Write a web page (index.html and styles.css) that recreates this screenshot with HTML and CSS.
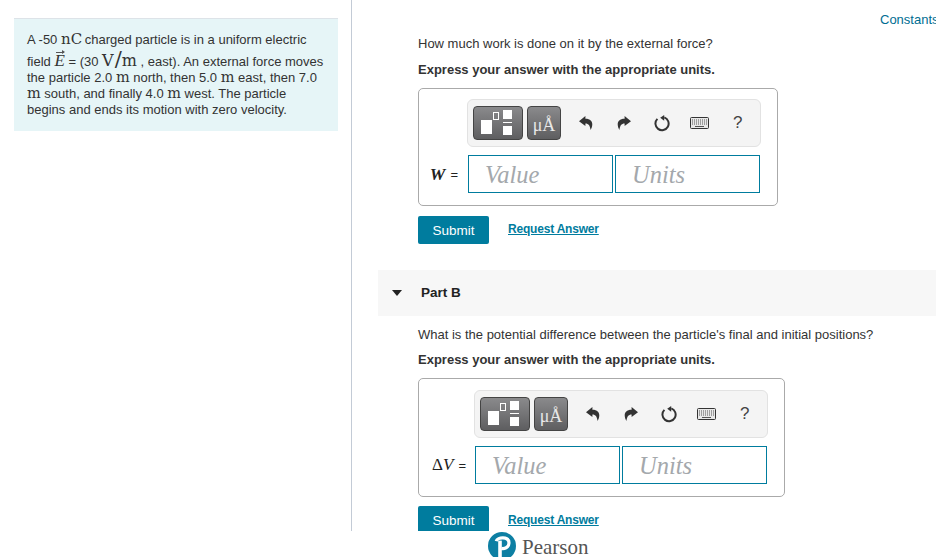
FILE: index.html
```html
<!DOCTYPE html>
<html lang="en">
<head>
    <meta charset="UTF-8">
    <title>Part A and Part B</title>
    <link rel="stylesheet" href="styles.css">
</head>
<body>
    <svg class="icon-defs" width="0" height="0">
        <symbol id="undo" viewBox="0 0 14 14">
            <path d="M6.4 0 L0 5.2 L6.4 10 V7.4 C9.6 7.4 11 9.4 11.6 14 C14.6 9 14 2.8 6.4 2.8 Z"/>
        </symbol>
        <symbol id="redo" viewBox="0 0 14 14">
            <path d="M7.6 0 L14 5.2 L7.6 10 V7.4 C4.4 7.4 3 9.4 2.4 14 C-0.6 9 0 2.8 7.6 2.8 Z"/>
        </symbol>
        <symbol id="reset" viewBox="0 0 16 17">
            <path class="ring" d="M3.4 3.9 A6.6 6.6 0 1 0 10.3 2.4"/>
            <path d="M10.2 0 L6.2 2.8 L10.2 5.8 Z"/>
        </symbol>
        <symbol id="keys" viewBox="0 0 19 12">
            <rect class="case" x="0.5" y="0.5" width="18" height="11" rx="1"/>
            <path class="keyrows" d="M2 3 H17 M2 5 H17 M2 7 H17"/>
            <path class="keyline" d="M5 9.5 H14"/>
        </symbol>
    </svg>

    <div class="page">
        <aside class="left">
            <div class="intro">
                <p>A -50 <span class="unit unit-nc">nC</span> charged particle is in a uniform electric field <span class="vec">E</span> = (30 <span class="unit unit-v">V</span><span class="unit unit-slash">/</span><span class="unit unit-m">m</span> , east). An external force moves the particle 2.0 <span class="unit">m</span> north, then 5.0 <span class="unit">m</span> east, then 7.0 <span class="unit">m</span> south, and finally 4.0 <span class="unit">m</span> west. The particle begins and ends its motion with zero velocity.</p>
            </div>
        </aside>

        <main class="right">
            <div class="constants"><a href="#">Constants</a></div>

            <section class="part part-a">
                <p class="question">How much work is done on it by the external force?</p>
                <p class="hint">Express your answer with the appropriate units.</p>
                <div class="answer answer-a">
                    <div class="toolbar">
                        <button class="tool tool-frac">
                            <span class="sq-big"></span><span class="sq-small"></span>
                            <span class="frac"><span></span><span></span></span>
                        </button>
                        <button class="tool tool-unit">μÅ</button>
                        <div class="actions">
                            <svg class="ic ic-undo"><use href="#undo"/></svg>
                            <svg class="ic ic-redo"><use href="#redo"/></svg>
                            <svg class="ic ic-reset"><use href="#reset"/></svg>
                            <svg class="ic ic-keys"><use href="#keys"/></svg>
                            <span class="help">?</span>
                        </div>
                    </div>
                    <div class="inputs">
                        <label class="var"><span class="sym sym-w">W</span><span class="eq">=</span></label>
                        <div class="field">Value</div>
                        <div class="field">Units</div>
                    </div>
                </div>
                <div class="actions-row">
                    <button class="submit">Submit</button>
                    <a class="request" href="#">Request Answer</a>
                </div>
            </section>

            <div class="part-head">
                <span class="caret"></span>
                <h2>Part B</h2>
            </div>

            <section class="part part-b">
                <p class="question">What is the potential difference between the particle's final and initial positions?</p>
                <p class="hint">Express your answer with the appropriate units.</p>
                <div class="answer answer-b">
                    <div class="toolbar">
                        <button class="tool tool-frac">
                            <span class="sq-big"></span><span class="sq-small"></span>
                            <span class="frac"><span></span><span></span></span>
                        </button>
                        <button class="tool tool-unit">μÅ</button>
                        <div class="actions">
                            <svg class="ic ic-undo"><use href="#undo"/></svg>
                            <svg class="ic ic-redo"><use href="#redo"/></svg>
                            <svg class="ic ic-reset"><use href="#reset"/></svg>
                            <svg class="ic ic-keys"><use href="#keys"/></svg>
                            <span class="help">?</span>
                        </div>
                    </div>
                    <div class="inputs">
                        <label class="var"><span class="sym">Δ<i>V</i></span><span class="eq">=</span></label>
                        <div class="field">Value</div>
                        <div class="field">Units</div>
                    </div>
                </div>
                <div class="actions-row">
                    <button class="submit">Submit</button>
                    <a class="request" href="#">Request Answer</a>
                </div>
            </section>
        </main>
    </div>

    <footer class="brand">
        <svg class="brand-logo" viewBox="0 0 28 28">
            <circle cx="14" cy="14" r="14" fill="#0d7fa3"/>
            <path d="M8.2 9.2 C9.4 4.8 21 4 21 11 C21 16 15.8 17 13.4 16.4" fill="none" stroke="#fff" stroke-width="3.2"/>
            <path d="M10.2 8.6 H13.8 V25.6 H10.2 Z" fill="#fff"/>
        </svg>
        <span class="brand-name">Pearson</span>
    </footer>
</body>
</html>
```

FILE: styles.css
```css
html, body {
    margin: 0;
    height: 557px;
    overflow: hidden;
    background: #fff;
}
body {
    font-family: "Liberation Sans", Arial, sans-serif;
    font-size: 13px;
    color: #333;
}
p {
    margin: 0;
}
button {
    font-family: inherit;
    border: none;
    padding: 0;
}
.icon-defs {
    position: absolute;
}

.page {
    display: flex;
    height: 531px;
    overflow: hidden;
}
.left {
    box-sizing: border-box;
    width: 352px;
    flex: none;
    padding: 18px 13px 0 14px;
    border-right: 1px solid #c3cbd6;
}
.intro {
    box-sizing: border-box;
    height: 113px;
    padding: 13px 13px 0;
    background: #e6f5f7;
    border-top: 1px solid #dde3e8;
    line-height: 16px;
}
.unit {
    font-family: "DejaVu Serif", serif;
    font-size: 14.5px;
    line-height: 12px;
}
.unit-nc {
    font-size: 15px;
    margin-right: -1px;
}
.unit-v {
    font-size: 16px;
    margin-right: 1px;
}
.unit-slash {
    font-size: 21px;
}
.unit-m {
    font-size: 16px;
}
.vec {
    display: inline-block;
    position: relative;
    padding-top: 6px;
    font-family: "Liberation Serif", serif;
    font-style: italic;
    font-size: 17px;
    line-height: 14px;
}
.vec::before {
    content: "";
    position: absolute;
    left: 2px;
    top: 4px;
    width: 8px;
    border-top: 1px solid #555;
}
.vec::after {
    content: "";
    position: absolute;
    left: 8px;
    top: 2px;
    border: 2px solid transparent;
    border-left: 3px solid #555;
    border-right: 0;
}

.right {
    flex: 1;
    min-width: 0;
    overflow: hidden;
}
.constants {
    padding: 12px 0 0 528px;
    height: 18px;
    line-height: 15px;
    white-space: nowrap;
}
.constants a {
    color: #006d92;
    text-decoration: none;
}

.part {
    padding-left: 66px;
}
.part-a {
    padding-top: 6px;
}
.question {
    line-height: 15px;
    white-space: nowrap;
}
.hint {
    margin-top: 11px;
    font-weight: bold;
    line-height: 15px;
}
.part-b .hint {
    margin-top: 10px;
}
.answer {
    box-sizing: border-box;
    margin-top: 11px;
    border: 1px solid #aaa;
    border-radius: 5px;
    padding-top: 10px;
}
.answer-a {
    width: 360px;
    height: 118px;
    padding-left: 49px;
}
.answer-b {
    width: 367px;
    height: 119px;
    padding-left: 56px;
    padding-top: 11px;
}
.toolbar {
    box-sizing: border-box;
    display: flex;
    align-items: flex-start;
    width: 294px;
    height: 48px;
    margin-left: -1px;
    padding: 6px 0 0 5px;
    background: #f4f4f4;
    border: 1px solid #e2e2e2;
    border-radius: 6px;
}
.tool {
    box-sizing: border-box;
    position: relative;
    flex: none;
    height: 34px;
    border: 1px solid #444;
    border-radius: 4px;
    background: linear-gradient(#8a8a8c, #5e5e60);
}
.tool-frac {
    width: 50px;
}
.tool-unit {
    width: 34px;
    margin-left: 4px;
    padding-top: 4px;
    color: #e8e8e8;
    font-family: "Liberation Serif", serif;
    font-size: 18px;
    line-height: 26px;
}
.sq-big {
    position: absolute;
    left: 7px;
    top: 13px;
    width: 11px;
    height: 14px;
    background: #fff;
}
.sq-small {
    box-sizing: border-box;
    position: absolute;
    left: 19px;
    top: 5px;
    width: 6px;
    height: 8px;
    border: 1px solid #fff;
}
.frac {
    position: absolute;
    left: 29px;
    top: 3px;
    width: 9px;
    height: 25px;
    display: flex;
    flex-direction: column;
    justify-content: space-between;
}
.frac span {
    height: 9px;
    background: #fff;
}
.frac::after {
    content: "";
    position: absolute;
    left: 0;
    right: 0;
    top: 12px;
    border-top: 1px solid #fff;
}
.actions {
    flex: 1;
    height: 34px;
    display: flex;
    align-items: center;
    color: #444;
}
.ic {
    flex: none;
    fill: #333;
}
.ic-undo, .ic-redo {
    width: 14px;
    height: 14px;
}
.ic-undo {
    margin-left: 18px;
}
.ic-redo {
    margin-left: 24px;
}
.ic-reset {
    width: 16px;
    height: 17px;
    margin-left: 23px;
}
.ring {
    fill: none;
    stroke: #333;
    stroke-width: 2;
}
.ic-keys {
    width: 19px;
    height: 12px;
    margin-left: 20px;
}
.case {
    fill: #e8e8e8;
    stroke: #333;
}
.keyrows {
    fill: none;
    stroke: #555;
    stroke-dasharray: 1 1;
}
.keyline {
    fill: none;
    stroke: #555;
}
.help {
    margin-left: 24px;
    font-size: 17px;
}

.inputs {
    display: flex;
    margin-top: 8px;
    position: relative;
}
.var {
    position: absolute;
    right: 100%;
    top: 0;
    height: 38px;
    display: flex;
    align-items: center;
    gap: 5px;
    padding-right: 9px;
    white-space: nowrap;
    color: #222;
}
.answer-a .var {
    padding-right: 10px;
}
.sym {
    font-family: "Liberation Serif", serif;
    font-size: 17px;
}
.sym-w {
    font-style: italic;
    font-weight: bold;
    font-size: 17.5px;
}
.eq {
    font-size: 13px;
}
.field {
    box-sizing: border-box;
    width: 145px;
    height: 38px;
    margin-right: 2px;
    padding-left: 16px;
    border: 1px solid #007c9e;
    font-family: "Liberation Serif", serif;
    font-style: italic;
    font-size: 24.5px;
    line-height: 38px;
    color: #a4a8ac;
}

.actions-row {
    display: flex;
    align-items: flex-start;
    margin-top: 10px;
}
.part-b .actions-row {
    margin-top: 9px;
}
.submit {
    width: 71px;
    height: 28px;
    background: #007c9e;
    color: #fff;
    font-size: 13.5px;
    border-radius: 2px;
}
.request {
    margin: 6px 0 0 19px;
    color: #007c9e;
    font-size: 12px;
    font-weight: bold;
    letter-spacing: -0.2px;
    line-height: 14px;
}
.part-b .request {
    margin-top: 7px;
}

.part-head {
    display: flex;
    align-items: center;
    height: 46px;
    margin: 26px 0 0 26px;
    background: #f7f7f7;
}
.caret {
    margin-left: 14px;
    border: 5px solid transparent;
    border-top: 6px solid #222;
    border-bottom: 0;
}
.part-head h2 {
    margin: 0 0 0 19px;
    font-size: 13.5px;
    line-height: 16px;
    color: #222;
}
.part-b {
    padding-top: 11px;
}

.brand {
    display: flex;
    align-items: center;
    height: 26px;
    padding-left: 488px;
    overflow: hidden;
}
.brand-logo {
    width: 28px;
    height: 28px;
    flex: none;
    margin-top: 3px;
}
.brand-name {
    margin: 6px 0 0 6px;
    font-family: "Liberation Serif", serif;
    font-size: 21px;
    line-height: 20px;
    color: #555;
}
```
